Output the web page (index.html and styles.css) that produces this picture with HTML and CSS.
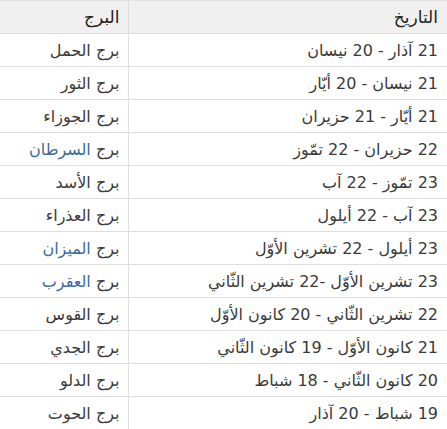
FILE: index.html
```html
<!DOCTYPE html>
<html lang="ar" dir="rtl">
<head>
<meta charset="utf-8">
<link rel="stylesheet" href="styles.css">
</head>
<body>
<table class="zodiac">
  <thead>
    <tr><th class="date">التاريخ</th><th class="sign">البرج</th></tr>
  </thead>
  <tbody>
    <tr><td class="date">21 آذار - 20 نيسان</td><td class="sign">برج الحمل</td></tr>
    <tr><td class="date">21 نيسان - 20 أيّار</td><td class="sign">برج الثور</td></tr>
    <tr><td class="date">21 أيّار - 21 حزيران</td><td class="sign">برج الجوزاء</td></tr>
    <tr><td class="date">22 حزيران - 22 تمّوز</td><td class="sign">برج <a class="link" href="#">السرطان</a></td></tr>
    <tr><td class="date">23 تمّوز - 22 آب</td><td class="sign">برج الأسد</td></tr>
    <tr><td class="date">23 آب - 22 أيلول</td><td class="sign">برج العذراء</td></tr>
    <tr><td class="date">23 أيلول - 22 تشرين الأوّل</td><td class="sign">برج <a class="link" href="#">الميزان</a></td></tr>
    <tr><td class="date">23 تشرين الأوّل -22 تشرين الثّاني</td><td class="sign">برج <a class="link" href="#">العقرب</a></td></tr>
    <tr><td class="date">22 تشرين الثّاني - 20 كانون الأوّل</td><td class="sign">برج القوس</td></tr>
    <tr><td class="date">21 كانون الأوّل - 19 كانون الثّاني</td><td class="sign">برج الجدي</td></tr>
    <tr><td class="date">20 كانون الثّاني - 18 شباط</td><td class="sign">برج الدلو</td></tr>
    <tr><td class="date">19 شباط - 20 آذار</td><td class="sign">برج الحوت</td></tr>
  </tbody>
</table>
</body>
</html>
```
FILE: styles.css
```css
html, body {
  margin: 0;
  padding: 0;
  background: #fff;
}
body {
  font-family: "DejaVu Sans", sans-serif;
  font-size: 16px;
  color: #3a3a3a;
}
.zodiac {
  width: 100%;
  border-collapse: collapse;
  border-top: 1px solid #e4e4e4;
}
.zodiac th,
.zodiac td {
  height: 32px;
  padding: 0 9px 0 8px;
  text-align: right;
  border-bottom: 1px solid #ddd;
  vertical-align: middle;
  box-sizing: border-box;
  white-space: nowrap;
}
.zodiac tr {
  height: 33px;
}
.zodiac th {
  background: #f0f0f0;
  font-weight: normal;
  color: #222;
  font-size: 17px;
}
.zodiac .sign {
  width: 128px;
  border-right: 1px solid #ddd;
  padding-right: 8px;
}
.zodiac .link {
  color: #3a6a9e;
  text-decoration: none;
}
```
